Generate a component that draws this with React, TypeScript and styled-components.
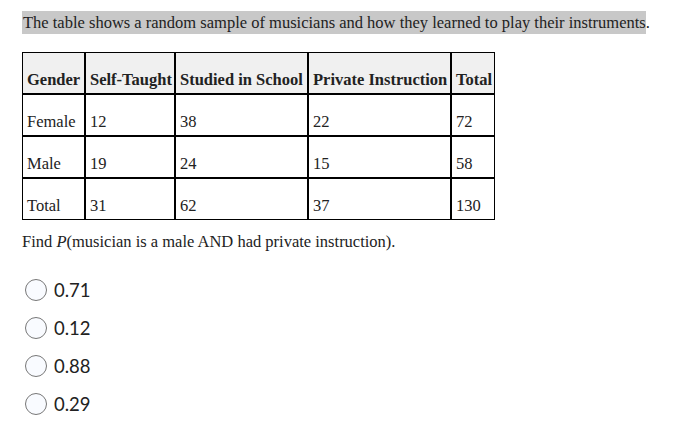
import React, { ReactElement } from 'react';
import styled, { createGlobalStyle } from 'styled-components';

// style  ---------------------------------------------------
const GlobalStyle = createGlobalStyle`
  body {
    margin: 0;
    background: #ffffff;
    color: #222222;
    font-family: "Liberation Serif", "Times New Roman", serif;
  }
`;

const Page = styled.div`
  padding: 11px 0 0 22px;
`;

const Intro = styled.p`
  margin: 0;
  font-size: 16.5px;
  line-height: 23px;
`;

const Highlight = styled.span`
  display: inline-block;
  background: #c8c8c8;
  padding-left: 1px;
`;

const Table = styled.table`
  margin-top: 18px;
  border-collapse: separate;
  border-spacing: 0;
  font-size: 16.5px;
  table-layout: fixed;
`;

interface CellProps {
  $w: number;
}

const HeadCell = styled.th<CellProps>`
  box-sizing: border-box;
  width: ${({ $w }) => $w}px;
  border: 1px solid #000;
  background: #f0f0f0;
  font-weight: bold;
  text-align: left;
  padding: 18px 2px 4px 4px;
  line-height: 18px;
  white-space: nowrap;
  overflow: hidden;
`;

const Cell = styled.td`
  border: 1px solid #000;
  text-align: left;
  padding: 18px 3px 4px 4px;
  line-height: 18px;
  white-space: nowrap;
`;

const Question = styled.p`
  margin: 13px 0 0;
  font-size: 16.5px;
  line-height: 18px;
`;

const Options = styled.div`
  margin-top: 28px;
  display: flex;
  flex-direction: column;
  gap: 16px;
`;

const Option = styled.label`
  display: flex;
  align-items: center;
  gap: 7px;
  padding-left: 3px;
  font-family: Lato, "Open Sans", sans-serif;
  font-size: 18.5px;
  color: #222;
  height: 22px;
`;

const Radio = styled.input`
  appearance: none;
  width: 22px;
  height: 22px;
  margin: 0;
  border: 1px solid #777;
  border-radius: 50%;
  background: #f9fbff;
`;

// data  ----------------------------------------------------
const headers: [string, number][] = [
  ['Gender', 63],
  ['Self-Taught', 90],
  ['Studied in School', 133],
  ['Private Instruction', 143],
  ['Total', 44],
];
const rows = [
  ['Female', '12', '38', '22', '72'],
  ['Male', '19', '24', '15', '58'],
  ['Total', '31', '62', '37', '130'],
];
const answers = ['0.71', '0.12', '0.88', '0.29'];

// Element  -------------------------------------------------
export default function App(): ReactElement {
  return (
    <Page>
      <GlobalStyle />
      <Intro>
        <Highlight>
          The table shows a random sample of musicians and how they learned to play their instruments
        </Highlight>
        .
      </Intro>
      <Table>
        <thead>
          <tr>
            {headers.map(([h, w]) => (
              <HeadCell key={h} $w={w}>
                {h}
              </HeadCell>
            ))}
          </tr>
        </thead>
        <tbody>
          {rows.map((row) => (
            <tr key={row[0]}>
              {row.map((c, i) => (
                <Cell key={i}>{c}</Cell>
              ))}
            </tr>
          ))}
        </tbody>
      </Table>
      <Question>
        Find <i>P</i>(musician is a male AND had private instruction).
      </Question>
      <Options>
        {answers.map((a) => (
          <Option key={a}>
            <Radio type="radio" name="answer" />
            {a}
          </Option>
        ))}
      </Options>
    </Page>
  );
}
